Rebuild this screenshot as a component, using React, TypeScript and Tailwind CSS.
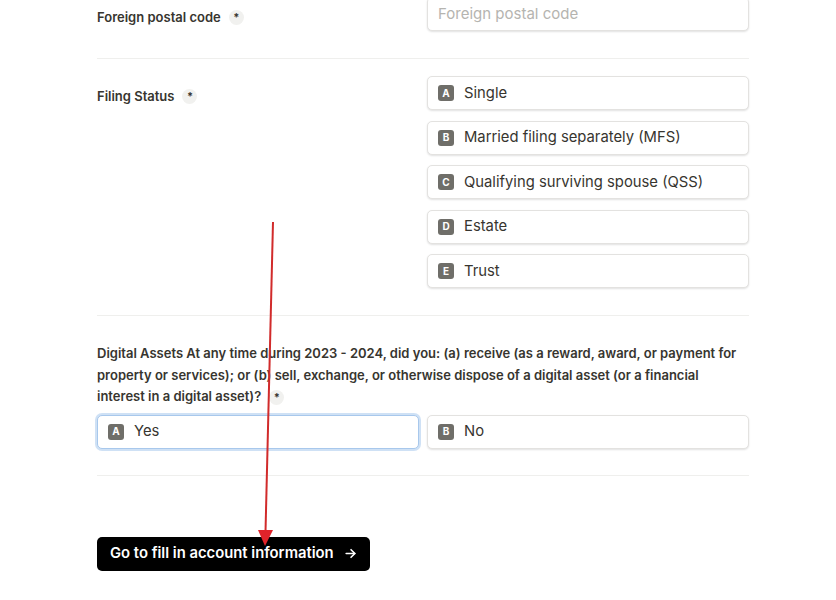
import React from 'react'

const FILING_OPTIONS = [
  { key: 'A', label: 'Single' },
  { key: 'B', label: 'Married filing separately (MFS)' },
  { key: 'C', label: 'Qualifying surviving spouse (QSS)' },
  { key: 'D', label: 'Estate' },
  { key: 'E', label: 'Trust' },
]

function Required() {
  return (
    <span className="ml-[8px] inline-flex h-[15px] w-[15px] items-center justify-center rounded-full bg-[#f1f1ef] text-[11px] font-bold leading-none text-[#37352f]">
      *
    </span>
  )
}

function Label({ children }: { children: React.ReactNode }) {
  return (
    <div className="flex items-center text-[13px] font-semibold text-[#37352f]">
      <span>{children}</span>
      <Required />
    </div>
  )
}

function Choice({
  letter,
  label,
  selected,
}: {
  letter: string
  label: string
  selected?: boolean
}) {
  return (
    <div
      className={
        selected
          ? 'flex h-[34px] items-center gap-[10px] rounded-[5px] border border-[#a8c8ec] bg-white px-[10px] shadow-[0_0_0_2px_rgba(168,200,236,0.55)]'
          : 'flex h-[34px] items-center gap-[10px] rounded-[5px] border border-[#e3e2e0] bg-white px-[10px] shadow-[0_1px_2px_rgba(0,0,0,0.12)]'
      }
    >
      <span className="flex h-[16px] w-[16px] items-center justify-center rounded-[3px] bg-[#6f6e69] text-[10px] font-bold text-white">
        {letter}
      </span>
      <span className="text-[14.8px] text-[#37352f]">{label}</span>
    </div>
  )
}

export default function App() {
  return (
    <div
      className="relative h-[600px] w-[836px] overflow-hidden bg-white"
      style={{ fontFamily: 'Inter, "Noto Sans", sans-serif' }}
    >
      <div className="-mt-[3px] ml-[97px] w-[652px]">
        {/* Foreign postal code */}
        <div className="grid grid-cols-2 gap-2 border-b border-[#efefed] pb-[27px]">
          <div className="pt-[11px]">
            <Label>Foreign postal code</Label>
          </div>
          <div className="flex h-[34px] items-center rounded-[5px] border border-[#e3e2e0] bg-white px-[10px] text-[15px] text-[#b5b4b0] shadow-[0_1px_2px_rgba(0,0,0,0.12)]">
            Foreign postal code
          </div>
        </div>

        {/* Filing status */}
        <div className="grid grid-cols-2 gap-2 border-b border-[#efefed] pb-[27px] pt-[17px]">
          <div className="pt-[11px]">
            <Label>Filing Status</Label>
          </div>
          <div className="flex flex-col gap-[10.5px]">
            {FILING_OPTIONS.map((o) => (
              <Choice key={o.key} letter={o.key} label={o.label} />
            ))}
          </div>
        </div>

        {/* Digital assets */}
        <div className="border-b border-[#efefed] pb-[26px] pt-[27px]">
          <p className="text-[13px] font-semibold leading-[21.5px] text-[#37352f]">
            Digital Assets At any time during 2023 - 2024, did you: (a) receive (as a reward, award, or
            payment for property or services); or (b) sell, exchange, or otherwise dispose of a digital
            asset (or a financial interest in a digital asset)?
            <Required />
          </p>
          <div className="mt-[7px] grid grid-cols-2 gap-2">
            <Choice letter="A" label="Yes" selected />
            <Choice letter="B" label="No" />
          </div>
        </div>

        <div className="pt-[61px]">
          <button
            type="button"
            className="flex h-[34px] items-center gap-[10px] rounded-[5px] bg-black px-[13px] text-[14.8px] font-semibold text-white"
          >
            Go to fill in account information
            <svg width="13" height="13" viewBox="0 0 24 24" fill="none" stroke="white" strokeWidth="3" strokeLinecap="round" strokeLinejoin="round">
              <path d="M4 12h16" />
              <path d="M13 5l7 7-7 7" />
            </svg>
          </button>
        </div>
      </div>

      {/* annotation arrow */}
      <svg className="pointer-events-none absolute left-0 top-0" width="836" height="600">
        <line x1="273" y1="222" x2="265.5" y2="532" stroke="#d12b2b" strokeWidth="2" />
        <polygon points="258,530 273,530 265,546" fill="#e0232a" />
      </svg>
    </div>
  )
}
